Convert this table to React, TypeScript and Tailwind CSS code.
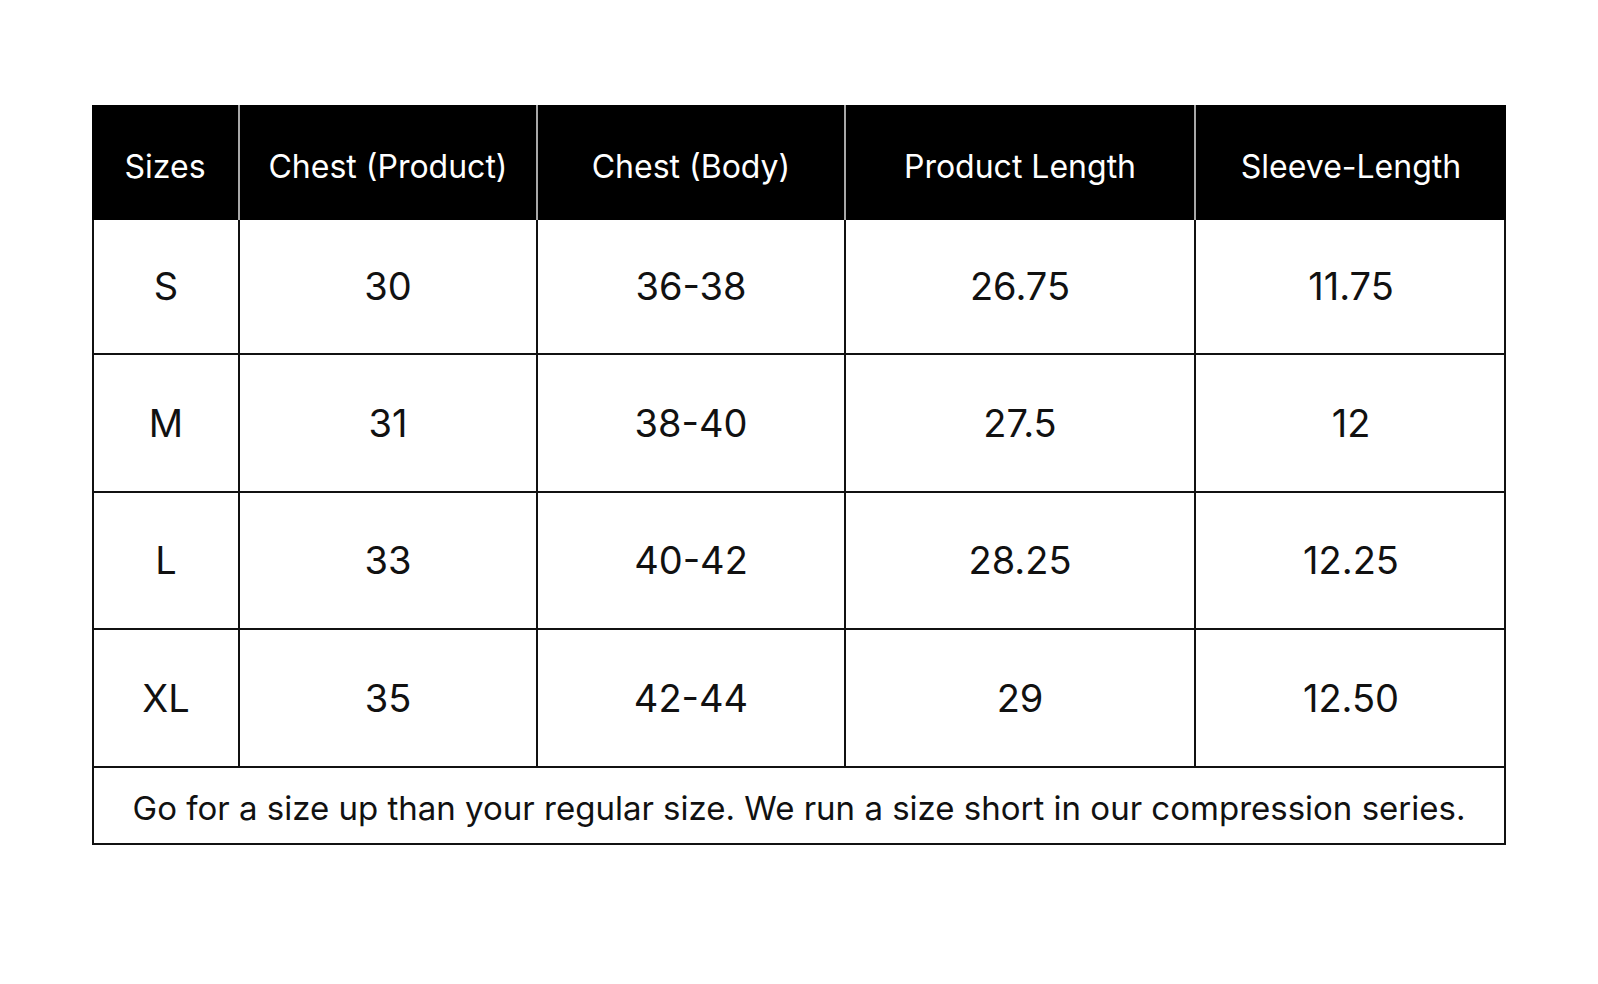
import React from "react";

const widths = ["w-[148px]", "w-[298px]", "w-[308px]", "w-[350px]", "w-[310px]"];
const headers = ["Sizes", "Chest (Product)", "Chest (Body)", "Product Length", "Sleeve-Length"];
const rows: { h: string; cells: string[] }[] = [
  { h: "h-[135px]", cells: ["S", "30", "36-38", "26.75", "11.75"] },
  { h: "h-[138px]", cells: ["M", "31", "38-40", "27.5", "12"] },
  { h: "h-[137px]", cells: ["L", "33", "40-42", "28.25", "12.25"] },
  { h: "h-[138px]", cells: ["XL", "35", "42-44", "29", "12.50"] },
];

export default function App() {
  return (
    <div
      className="w-[1598px] h-[984px] bg-white pt-[105px] pl-[92px]"
      style={{ fontFamily: "Inter, 'Liberation Sans', sans-serif" }}
    >
      <div className="w-[1414px] border-2 border-[#111] border-t-0">
        <div className="flex h-[115px] -mx-[2px] bg-black text-white">
          {headers.map((t, i) => (
            <div
              key={t}
              className={`${widths[i]} shrink-0 flex items-center justify-center pt-[8px] text-[32px] ${
                i < 4 ? "border-r-2 border-[#a8a8a8]" : ""
              }`}
            >
              {t}
            </div>
          ))}
        </div>
        {rows.map((r) => (
          <div key={r.cells[0]} className={`flex ${r.h} -ml-[2px] border-b-2 border-[#111]`}>
            {r.cells.map((c, i) => (
              <div
                key={i}
                className={`${widths[i]} shrink-0 flex items-center justify-center text-[38px] text-[#111] ${
                  i === 0 ? "pl-[2px]" : ""
                } ${i < 4 ? "border-r-2 border-[#111]" : ""}`}
              >
                {c}
              </div>
            ))}
          </div>
        ))}
        <div className="h-[75px] flex items-center justify-center text-[33px] text-[#111] pt-[6px] whitespace-nowrap">
          Go for a size up than your regular size. We run a size short in our compression series.
        </div>
      </div>
    </div>
  );
}
